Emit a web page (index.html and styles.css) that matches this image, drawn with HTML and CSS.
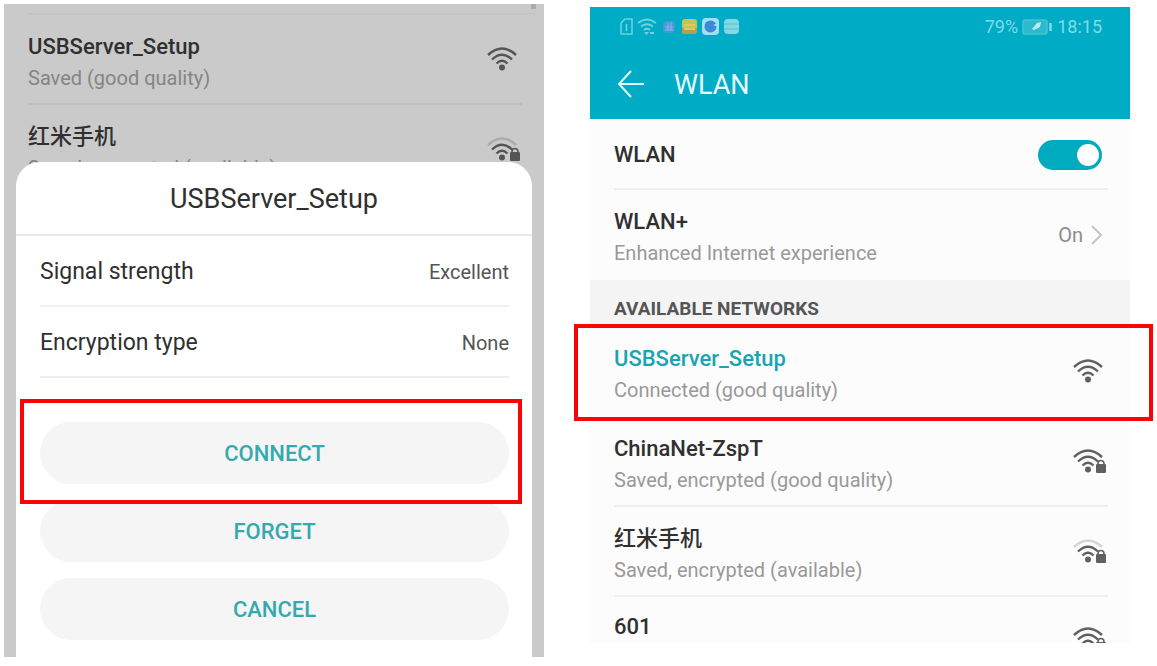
FILE: index.html
```
<!DOCTYPE html>
<html lang="en">
<head>
<meta charset="utf-8">
<title>WLAN setup</title>
<link rel="stylesheet" href="styles.css">
</head>
<body>
<svg class="symbols" aria-hidden="true">
  <symbol id="arcs" viewBox="0 0 35 32">
    <path d="M5 13.500Q15 4 25 13.500M9.500 17.500Q15 12 20.500 17.500" fill="none" stroke="currentColor" stroke-width="2.400"/>
    <circle cx="15" cy="21.500" r="3" fill="currentColor"/>
  </symbol>
  <symbol id="outer" viewBox="0 0 35 32">
    <path d="M1 9Q15-4 29 9" fill="none" stroke="currentColor" stroke-width="2.400"/>
  </symbol>
  <symbol id="lock" viewBox="0 0 35 32">
    <path d="M25 17V15.500a3 3 0 0 1 6 0V17" fill="none" stroke="currentColor" stroke-width="1.600"/>
    <rect x="23" y="16" width="10" height="9" rx="1" fill="currentColor"/>
  </symbol>
</svg>
<main class="screens">
  <section class="phone dimmed">
    <div class="backdrop">
      <div class="edge"><span class="thumb"></span></div>
      <div class="row">
        <div class="label"><span class="name">USBServer_Setup</span><span class="note">Saved (good quality)</span></div>
        <svg class="signal" viewBox="0 0 35 32"><use href="#arcs"/><use href="#outer"/></svg>
      </div>
      <div class="row">
        <div class="label"><span class="name">红米手机</span><span class="note">Saved, encrypted (available)</span></div>
        <svg class="signal" viewBox="0 0 35 32"><use href="#arcs"/><use href="#outer" class="weak"/><use href="#lock"/></svg>
      </div>
    </div>
    <div class="dialog" role="dialog" aria-labelledby="dialog-title">
      <h2 class="dialog-title" id="dialog-title">USBServer_Setup</h2>
      <dl class="details">
        <div class="detail"><dt>Signal strength</dt><dd>Excellent</dd></div>
        <div class="detail"><dt>Encryption type</dt><dd>None</dd></div>
      </dl>
      <div class="actions">
        <div class="marked marked-action"><button class="action" type="button">CONNECT</button></div>
        <button class="action" type="button">FORGET</button>
        <button class="action" type="button">CANCEL</button>
      </div>
    </div>
  </section>

  <section class="phone settings">
    <header class="appbar">
      <div class="status">
        <svg class="status-icons" viewBox="0 0 122 20" aria-hidden="true">
          <path d="M4 6l4-4h7v15H4zM9.500 7v7" fill="none" stroke="#6fd2df" stroke-width="1.500"/>
          <path d="M21 6Q30-1 39 6M24 9.500Q30 5 36 9.500M27 13Q30 10.500 33 13" fill="none" stroke="#6fd2df" stroke-width="1.800"/>
          <path d="M27 15h5l-2.500 3zM33 15h4v2h-4z" fill="#6fd2df"/>
          <rect x="46" y="4" width="12" height="12" rx="4" fill="#409bd8"/>
          <path d="M48 10h8M51 6v8M54 5v9M48 13h8" stroke="#80a9e6" stroke-width="1.500"/>
          <rect x="65" y="2" width="15" height="15" rx="3" fill="#bfc65c"/>
          <path d="M65 11h15v3a3 3 0 0 1-3 3h-9a3 3 0 0 1-3-3z" fill="#b4a050"/>
          <path d="M67 8h11M67 12h11" stroke="#e2c95c" stroke-width="2"/>
          <rect x="85" y="1" width="17" height="17" rx="4" fill="#9fe0f2"/>
          <circle cx="93.500" cy="9.500" r="6" fill="#3d88d8"/>
          <path d="M96 8l5-2v4z" fill="#9fe0f2"/>
          <rect x="107" y="2" width="15" height="15" rx="4" fill="#84d9e4"/>
          <path d="M107 7h15M107 12h15" stroke="#50bfd0" stroke-width="1.200"/>
        </svg>
        <div class="status-info">
          <span>79%</span>
          <svg class="battery" viewBox="0 0 31 16" aria-hidden="true">
            <rect x="1" y="1" width="24" height="14" rx="2" fill="#2fb9ce" stroke="#45c4d6" stroke-width="1.500"/>
            <path d="M10 10l5-6 4-1-1 5-6 3z" fill="#b5edf4"/>
            <path d="M28.500 4v8" stroke="#7fdbe6" stroke-width="2.500"/>
          </svg>
          <span>18:15</span>
        </div>
      </div>
      <div class="heading">
        <button class="back" type="button" aria-label="Back">
          <svg class="back-icon" viewBox="0 0 28 28"><path d="M27 14H2M14 1L2 14l12 13" fill="none" stroke="currentColor" stroke-width="2"/></svg>
        </button>
        <h1 class="title">WLAN</h1>
      </div>
    </header>
    <div class="row row-short">
      <label class="name" for="wlan">WLAN</label>
      <input class="toggle" id="wlan" type="checkbox" role="switch" checked>
    </div>
    <div class="row row-last">
      <div class="label"><span class="name">WLAN+</span><span class="note">Enhanced Internet experience</span></div>
      <div class="value">On
        <svg class="chevron" viewBox="0 0 12 20" aria-hidden="true"><path d="M1 1l9 9-9 9" fill="none" stroke="currentColor" stroke-width="2"/></svg>
      </div>
    </div>
    <h2 class="section">AVAILABLE NETWORKS</h2>
    <div class="marked marked-row">
      <div class="row">
        <div class="label"><span class="name current">USBServer_Setup</span><span class="note">Connected (good quality)</span></div>
        <svg class="signal" viewBox="0 0 35 32"><use href="#arcs"/><use href="#outer"/></svg>
      </div>
    </div>
    <div class="row">
      <div class="label"><span class="name">ChinaNet-ZspT</span><span class="note">Saved, encrypted (good quality)</span></div>
      <svg class="signal" viewBox="0 0 35 32"><use href="#arcs"/><use href="#outer"/><use href="#lock"/></svg>
    </div>
    <div class="row">
      <div class="label"><span class="name">红米手机</span><span class="note">Saved, encrypted (available)</span></div>
      <svg class="signal" viewBox="0 0 35 32"><use href="#arcs"/><use href="#outer" class="weak"/><use href="#lock"/></svg>
    </div>
    <div class="cut">
      <div class="row">
        <div class="label"><span class="name">601</span></div>
        <svg class="signal" viewBox="0 0 35 32"><use href="#arcs"/><use href="#outer"/><use href="#lock"/></svg>
      </div>
    </div>
  </section>
</main>
</body>
</html>
```
FILE: styles.css
```
* { box-sizing: border-box; }

body {
  margin: 0;
  background: #fff;
  color: #303030;
  font-family: Roboto, "Noto Sans CJK SC", sans-serif;
  font-size: 22px;
  line-height: 28px;
}

h1, h2, dl, dd { margin: 0; font-weight: 400; }
button { font: inherit; border: 0; padding: 0; }

.symbols { position: absolute; width: 0; height: 0; }

.screens {
  display: grid;
  grid-template-columns: 1fr 1fr;
  gap: 46px;
  align-items: start;
  padding: 4px 27px 8px 4px;
}

.dimmed { display: grid; background: #cacaca; }
.backdrop, .dialog { grid-area: 1 / 1; }
.backdrop { --line: #c0c0c0; --note: #858585; --icon: #555; }

.edge {
  display: flex;
  justify-content: flex-end;
  height: 11px;
  margin: 0 8px 0 24px;
  border-bottom: 2px solid #c5c5c5;
}
.thumb { width: 5px; height: 5px; background: #aaa; }

.settings {
  --line: #eee;
  --note: #999;
  --icon: #606060;
  margin-top: 3px;
  background: #fcfcfc;
}

.row {
  display: flex;
  align-items: center;
  justify-content: space-between;
  height: 90px;
  margin: 0 22px 0 24px;
  padding-top: 6px;
  border-bottom: 2px solid var(--line);
}
.row-short { height: 71px; padding-top: 2px; }
.row-last { padding-top: 4px; border-bottom: 0; }
.marked-row .row { border-bottom-color: transparent; }

.label { display: flex; flex-direction: column; gap: 3px; }
.name { font-weight: 500; color: #303030; }
.note { font-size: 20px; color: var(--note); }
.current { color: #18a5b3; }

.signal { width: 35px; height: 32px; color: var(--icon); }
.weak { opacity: 0.25; }

.dialog {
  margin: 158px 12px 0;
  padding-bottom: 17px;
  border-radius: 24px 24px 0 0;
  background: #fff;
}
.dialog-title {
  padding: 22px 24px 20px;
  border-bottom: 2px solid #e8e8e8;
  font-size: 27px;
  line-height: 30px;
  text-align: center;
}
.details { padding: 0 23px 0 24px; }
.detail {
  display: flex;
  align-items: center;
  justify-content: space-between;
  height: 71px;
  padding-top: 2px;
  border-bottom: 2px solid #f0f0f0;
}
.detail dt { font-size: 23px; }
.detail dd { font-size: 20px; color: #555; }

.actions { display: grid; gap: 16px; padding: 44px 23px 0 24px; }
.action {
  width: 100%;
  height: 62px;
  padding-top: 2px;
  border-radius: 31px;
  background: #f5f5f5;
  color: #35a9ae;
  font-weight: 500;
}

.marked { position: relative; }
.marked::after {
  content: "";
  position: absolute;
  border: 4px solid #fa0505;
  pointer-events: none;
}
.marked-action { display: grid; }
.marked-action::after { inset: -23px -13px -20px -20px; }
.marked-row::after { inset: -3px -23px -4px -16px; }

.appbar { height: 112px; padding: 8px 28px 0 27px; background: #00abc6; color: #e6fbff; }
.status { display: flex; align-items: center; justify-content: space-between; height: 24px; }
.status-icons { width: 122px; height: 20px; }
.status-info { display: flex; align-items: center; gap: 4px; font-size: 18px; color: #7fdbe6; }
.battery { width: 31px; height: 16px; }

.heading { display: flex; align-items: center; gap: 29px; height: 90px; }
.back { display: flex; background: none; color: inherit; }
.back-icon { width: 28px; height: 28px; }
.title { padding-top: 2px; font-size: 27px; }

.toggle {
  display: flex;
  align-items: center;
  justify-content: flex-end;
  appearance: none;
  width: 64px;
  height: 30px;
  margin: 0 6px 0 0;
  padding: 3px;
  border-radius: 15px;
  background: #00abc0;
}
.toggle::before { content: ""; width: 22px; height: 22px; border-radius: 50%; background: #fff; }

.value { display: flex; align-items: center; gap: 8px; margin: 0 5px 4px 0; font-size: 20px; color: #8c8c8c; }
.chevron { width: 12px; height: 20px; color: #c4c4c4; }

.section {
  height: 47px;
  padding: 15px 24px 0;
  background: #f4f4f4;
  color: #555;
  font-size: 19px;
  font-weight: 700;
}

.cut { height: 46px; overflow: hidden; }
.cut .row { align-items: flex-start; padding-top: 16px; }
.cut .signal { margin-top: 13px; }
```
